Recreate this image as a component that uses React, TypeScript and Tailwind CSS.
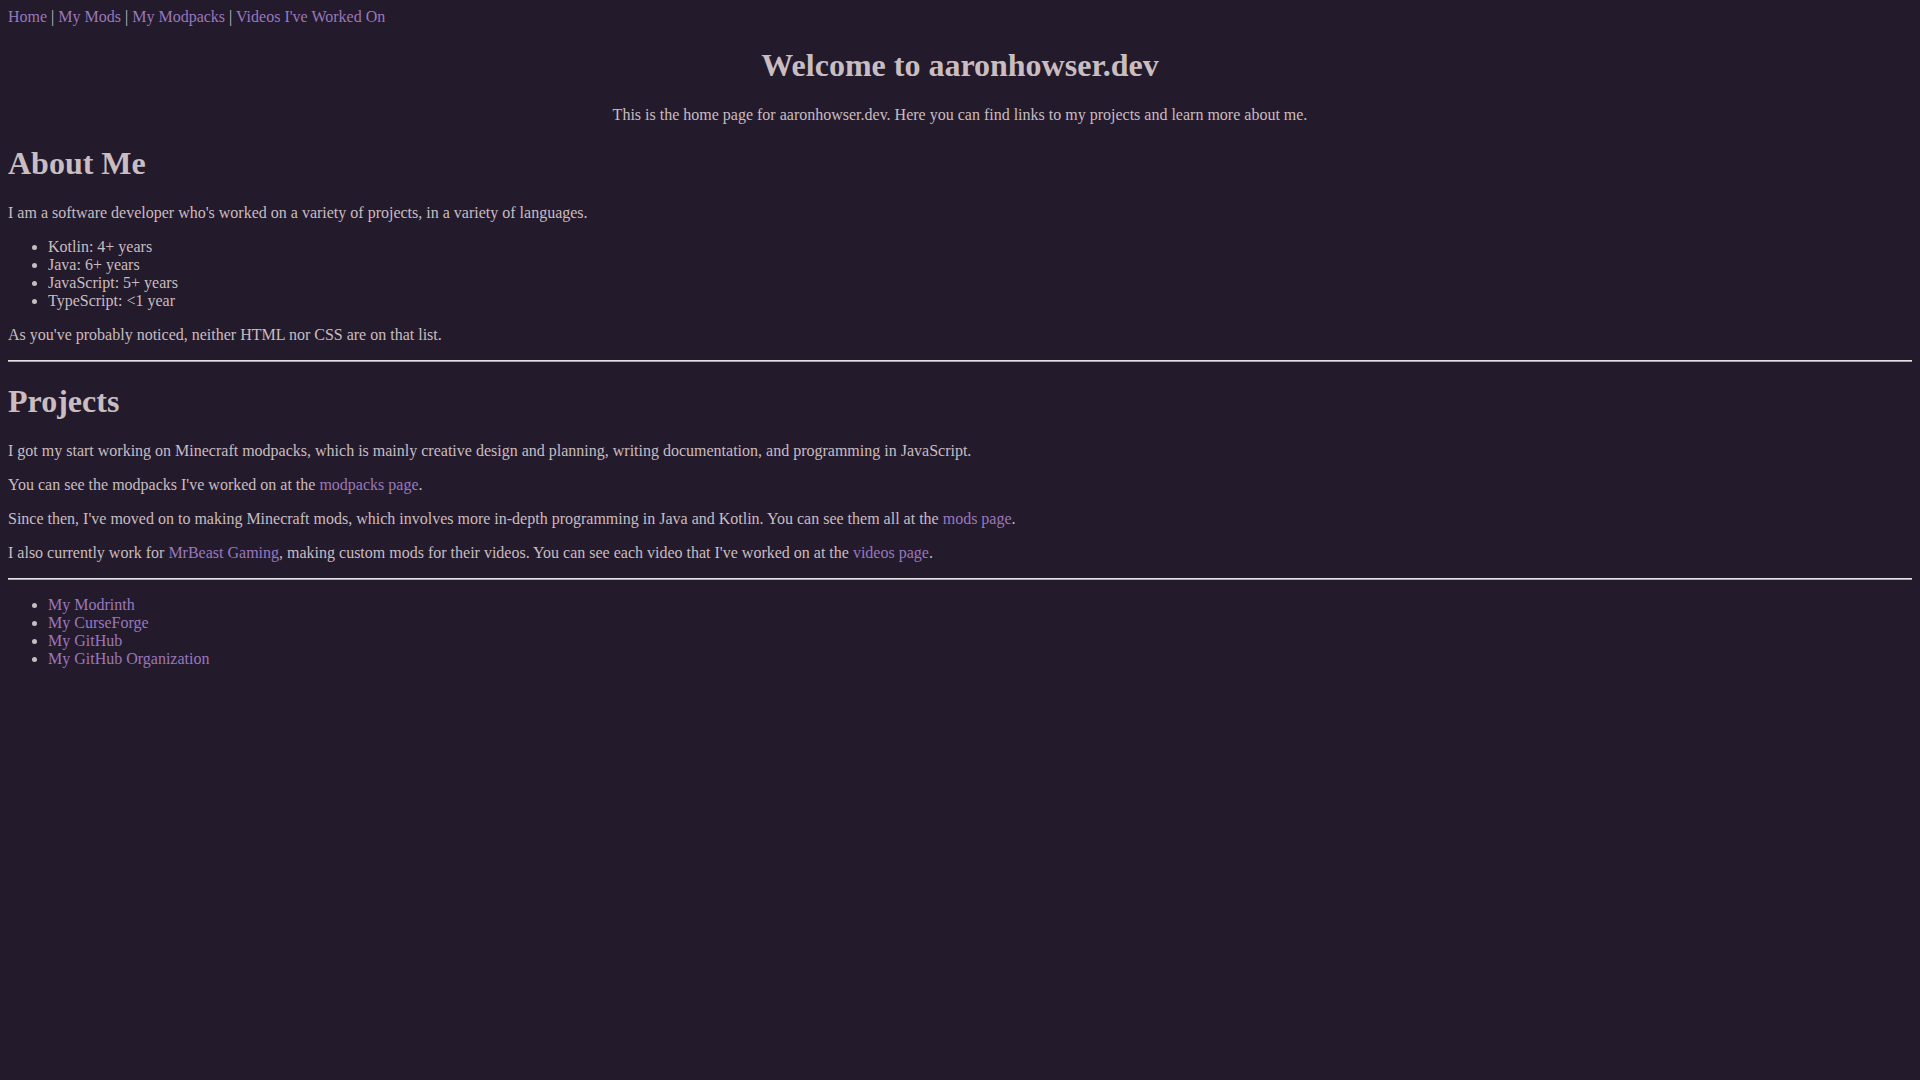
const link = 'text-[#9a78bd]';

export default function App() {
  return (
    <div className="min-h-screen bg-[#231a2b] text-[#c9bdc1] font-['Liberation_Serif',serif] text-[16px] leading-normal">
      <div className="p-2 [&_*]:leading-[normal]">
        <div>
          <a href="#" className={link}>Home</a> | <a href="#" className={link}>My Mods</a> |{' '}
          <a href="#" className={link}>My Modpacks</a> | <a href="#" className={link}>Videos I've Worked On</a>
        </div>

        <div className="text-center">
          <h1 className="text-[32px] font-bold my-[21.44px]">Welcome to aaronhowser.dev</h1>
          <p className="my-4">
            This is the home page for aaronhowser.dev. Here you can find links to my projects and learn more about me.
          </p>
        </div>

        <h1 className="text-[32px] font-bold my-[21.44px]">About Me</h1>
        <p className="my-4">I am a software developer who's worked on a variety of projects, in a variety of languages.</p>
        <ul className="list-disc pl-10 my-4">
          <li>Kotlin: 4+ years</li>
          <li>Java: 6+ years</li>
          <li>JavaScript: 5+ years</li>
          <li>TypeScript: &lt;1 year</li>
        </ul>
        <p className="my-4">As you've probably noticed, neither HTML nor CSS are on that list.</p>

        <hr className="my-2 border-0 border-t border-b border-t-[#e4e4e4] border-b-[#a6a6a6]" />

        <h1 className="text-[32px] font-bold my-[21.44px]">Projects</h1>
        <p className="my-4">
          I got my start working on Minecraft modpacks, which is mainly creative design and planning, writing
          documentation, and programming in JavaScript.
        </p>
        <p className="my-4">
          You can see the modpacks I've worked on at the <a href="#" className={link}>modpacks page</a>.
        </p>
        <p className="my-4">
          Since then, I've moved on to making Minecraft mods, which involves more in-depth programming in Java and
          Kotlin. You can see them all at the <a href="#" className={link}>mods page</a>.
        </p>
        <p className="my-4">
          I also currently work for <a href="#" className={link}>MrBeast Gaming</a>, making custom mods for their
          videos. You can see each video that I've worked on at the <a href="#" className={link}>videos page</a>.
        </p>

        <hr className="my-2 border-0 border-t border-b border-t-[#e4e4e4] border-b-[#a6a6a6]" />

        <ul className="list-disc pl-10 my-4">
          <li><a href="#" className={link}>My Modrinth</a></li>
          <li><a href="#" className={link}>My CurseForge</a></li>
          <li><a href="#" className={link}>My GitHub</a></li>
          <li><a href="#" className={link}>My GitHub Organization</a></li>
        </ul>
      </div>
    </div>
  );
}
